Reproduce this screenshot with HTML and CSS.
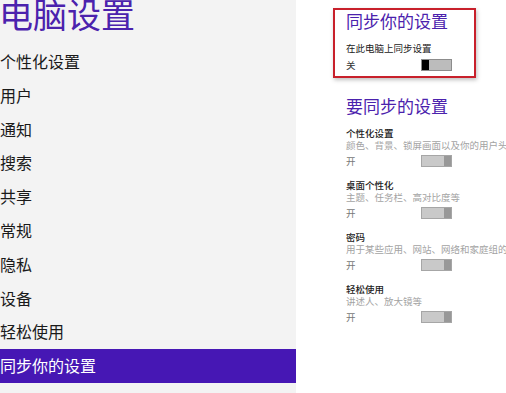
FILE: index.html
```html
<!DOCTYPE html>
<html lang="zh-CN">
<head>
    <meta charset="UTF-8">
    <title>电脑设置</title>
    <link rel="stylesheet" href="styles.css">
</head>
<body>
    <!-- Left navigation -->
    <div class="nav-panel">
        <h1 class="page-title">电脑设置</h1>
        <ul class="nav-list">
            <li>个性化设置</li>
            <li>用户</li>
            <li>通知</li>
            <li>搜索</li>
            <li>共享</li>
            <li>常规</li>
            <li>隐私</li>
            <li>设备</li>
            <li>轻松使用</li>
            <li class="selected">同步你的设置</li>
        </ul>
    </div>

    <!-- Right content -->
    <div class="content-panel">
        <div class="highlight-box">
            <h2 class="section-title">同步你的设置</h2>
            <p class="setting-label">在此电脑上同步设置</p>
            <div class="toggle-row">
                <span class="state">关</span>
                <span class="toggle off"><span class="thumb"></span></span>
            </div>
        </div>

        <div class="sync-list">
            <h2 class="section-title">要同步的设置</h2>

            <div class="sync-item">
                <p class="setting-label">个性化设置</p>
                <p class="setting-desc">颜色、背景、锁屏画面以及你的用户头像</p>
                <div class="toggle-row">
                    <span class="state">开</span>
                    <span class="toggle on"><span class="thumb"></span></span>
                </div>
            </div>

            <div class="sync-item">
                <p class="setting-label">桌面个性化</p>
                <p class="setting-desc">主题、任务栏、高对比度等</p>
                <div class="toggle-row">
                    <span class="state">开</span>
                    <span class="toggle on"><span class="thumb"></span></span>
                </div>
            </div>

            <div class="sync-item">
                <p class="setting-label">密码</p>
                <p class="setting-desc">用于某些应用、网站、网络和家庭组的登录信息</p>
                <div class="toggle-row">
                    <span class="state">开</span>
                    <span class="toggle on"><span class="thumb"></span></span>
                </div>
            </div>

            <div class="sync-item">
                <p class="setting-label">轻松使用</p>
                <p class="setting-desc">讲述人、放大镜等</p>
                <div class="toggle-row">
                    <span class="state">开</span>
                    <span class="toggle on"><span class="thumb"></span></span>
                </div>
            </div>
        </div>
    </div>
</body>
</html>
```

FILE: styles.css
```css
body {
    margin: 0;
    padding: 0;
    display: flex;
    height: 393px;
    overflow: hidden;
    background-color: white;
    font-family: 'Noto Sans CJK SC', sans-serif;
    color: #1a1a1a;
}

/* Left navigation */
.nav-panel {
    width: 296px;
    flex-shrink: 0;
    background-color: #f3f3f3;
}

.page-title {
    margin: -3px 0 14px -1px;
    font-size: 34px;
    line-height: 34px;
    font-weight: normal;
    color: #4b22ad;
}

.nav-list {
    list-style-type: none;
    margin: 0;
    padding: 0;
}

.nav-list li {
    height: 33.8px;
    line-height: 33.8px;
    font-size: 16px;
    white-space: nowrap;
}

.nav-list li.selected {
    background-color: #4617b4;
    color: white;
}

/* Right content */
.content-panel {
    flex: 1;
    padding-left: 37px;
    padding-top: 8px;
    min-width: 0;
}

.highlight-box {
    width: 128px;
    padding: 0 0 3px 11px;
    border: 2px solid #c8202b;
    box-shadow: 1px 2px 4px rgba(0, 0, 0, 0.25);
}

.section-title {
    margin: 0 0 10px;
    font-size: 17px;
    line-height: 22px;
    font-weight: normal;
    color: #4b22ad;
    white-space: nowrap;
}

.setting-label {
    margin: 0;
    font-size: 9.5px;
    line-height: 12px;
    font-weight: 500;
    color: #222;
    white-space: nowrap;
}

.highlight-box .setting-label {
    font-weight: normal;
}

.setting-desc {
    margin: 0;
    font-size: 9.5px;
    line-height: 12px;
    color: #a3a3a3;
    white-space: nowrap;
}

.toggle-row {
    display: flex;
    align-items: center;
    height: 16px;
    margin-top: 3px;
}

.state {
    width: 75px;
    font-size: 9.5px;
    color: #333;
}

.sync-list {
    margin-left: 13px;
    margin-top: 17px;
}

.sync-item {
    margin-bottom: 10px;
}

.sync-item .toggle-row {
    margin-top: 2px;
}

.sync-item .state {
    color: #777;
}

.toggle {
    display: flex;
    width: 29px;
    height: 10px;
    border: 1px solid #a6a6a6;
    background-color: #c9c9c9;
}

.toggle .thumb {
    width: 7px;
    height: 100%;
}

.toggle.off {
    background-color: #bcbcbc;
    border-color: #8c8c8c;
}

.toggle.off .thumb {
    background-color: #000;
}

.toggle.on {
    justify-content: flex-end;
}

.toggle.on .thumb {
    background-color: #989898;
}
```
